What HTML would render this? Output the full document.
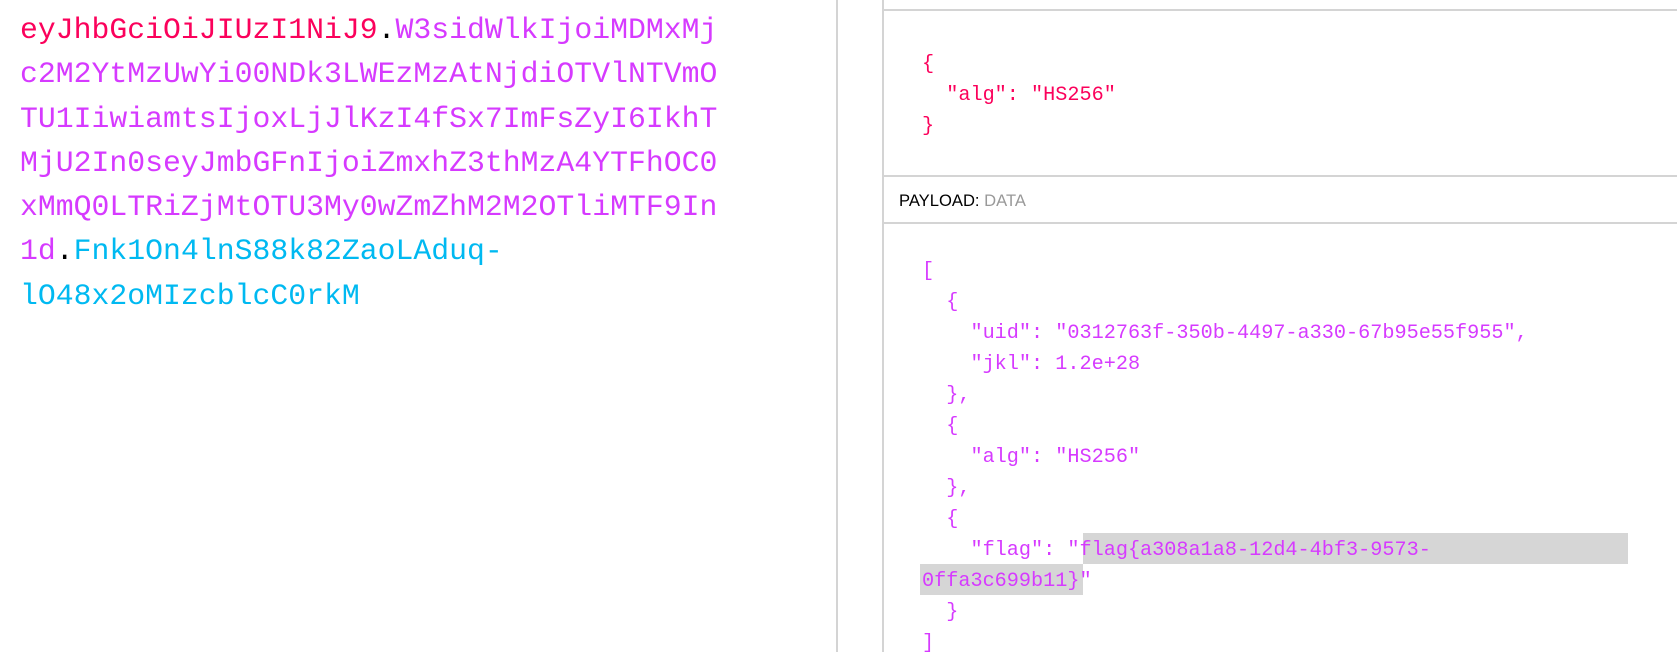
<!DOCTYPE html>
<html><head><meta charset="utf-8"><style>
html,body{margin:0;padding:0;background:#fff;width:1677px;height:652px;overflow:hidden;position:relative}
.mono{font-family:"Liberation Mono",monospace;white-space:pre;position:absolute}
#left{left:20px;top:8px;font-size:29.8px;line-height:44.3px}
.r{color:#fb015b}.p{color:#d63aff}.c{color:#00b9f1}.k{color:#000}
.vl{position:absolute;top:0;width:2px;height:652px;background:#d4d4d4}
.hl{position:absolute;left:883px;right:0;height:2px;background:#d4d4d4}
.js{font-size:20.2px;line-height:31px}
#lbl{position:absolute;left:899px;top:191px;font-family:"Liberation Sans",sans-serif;font-size:16.6px;color:#000}
#lbl span{color:#999}
.hi{position:absolute;background:#d6d6d6}
</style></head><body>
<div class="vl" style="left:836px"></div>
<div class="vl" style="left:882px"></div>
<div class="hl" style="top:9px"></div>
<div class="hl" style="top:175px"></div>
<div class="hl" style="top:222px"></div>
<div class="hi" style="left:1083px;top:533px;width:545px;height:31px"></div>
<div class="hi" style="left:920px;top:564px;width:163px;height:31px"></div>
<div id="left" class="mono"><span class="r">eyJhbGciOiJIUzI1NiJ9</span><span class="k">.</span><span class="p">W3sidWlkIjoiMDMxMj
c2M2YtMzUwYi00NDk3LWEzMzAtNjdiOTVlNTVmO
TU1IiwiamtsIjoxLjJlKzI4fSx7ImFsZyI6IkhT
MjU2In0seyJmbGFnIjoiZmxhZ3thMzA4YTFhOC0
xMmQ0LTRiZjMtOTU3My0wZmZhM2M2OTliMTF9In
1d</span><span class="k">.</span><span class="c">Fnk1On4lnS88k82ZaoLAduq-
lO48x2oMIzcblcC0rkM</span></div>
<div class="mono js r" style="left:922px;top:49px">{
  "alg": "HS256"
}</div>
<div id="lbl">PAYLOAD: <span>DATA</span></div>
<div class="mono js p" style="left:922px;top:256px">[
  {
    "uid": "0312763f-350b-4497-a330-67b95e55f955",
    "jkl": 1.2e+28
  },
  {
    "alg": "HS256"
  },
  {
    "flag": "flag{a308a1a8-12d4-4bf3-9573-
0ffa3c699b11}"
  }
]</div>
</body></html>
